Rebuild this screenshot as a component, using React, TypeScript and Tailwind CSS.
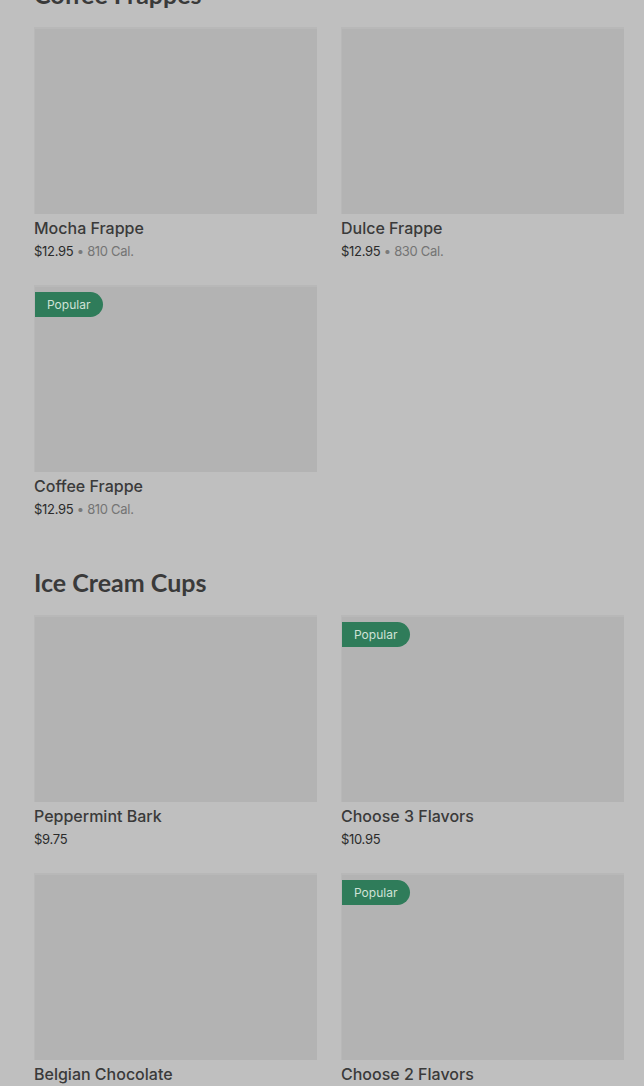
import React from 'react';

interface Item {
  name: string;
  price: string;
  cal?: string;
  popular?: boolean;
}

const sections: { title: string; items: Item[] }[] = [
  {
    title: 'Coffee Frappes',
    items: [
      { name: 'Mocha Frappe', price: '$12.95', cal: '810 Cal.' },
      { name: 'Dulce Frappe', price: '$12.95', cal: '830 Cal.' },
      { name: 'Coffee Frappe', price: '$12.95', cal: '810 Cal.', popular: true },
    ],
  },
  {
    title: 'Ice Cream Cups',
    items: [
      { name: 'Peppermint Bark', price: '$9.75' },
      { name: 'Choose 3 Flavors', price: '$10.95', popular: true },
      { name: 'Belgian Chocolate', price: '$9.75' },
      { name: 'Choose 2 Flavors', price: '$8.95', popular: true },
    ],
  },
];

const Card = ({ item }: { item: Item }) => (
  <div>
    <div className="relative h-[187px] bg-[#b3b3b3] border-t-[2px] border-l-[1px] border-[#b8b8b8]">
      {item.popular && (
        <span className="absolute left-0 top-[5px] h-[25px] pl-[12px] pr-[13px] rounded-r-full bg-[#2f7c5a] text-[#cfe2d7] text-[12px] leading-[25px] font-['Inter',sans-serif]">
          Popular
        </span>
      )}
    </div>
    <div className="mt-[3px] text-[16px] leading-[22px] font-medium text-[#3a3a3a] font-['Inter',sans-serif]">
      {item.name}
    </div>
    <div className="mt-[2px] text-[13px] leading-[20px] font-['Inter',sans-serif] tracking-[-0.3px]">
      <span className="text-[#2b2b2b]">{item.price}</span>
      {item.cal && (
        <>
          <span className="text-[#7a7a7a]"> • </span>
          <span className="text-[#747474]">{item.cal}</span>
        </>
      )}
    </div>
  </div>
);

export default function App() {
  return (
    <div className="h-[1086px] overflow-hidden bg-[#bfbfbf] pl-[34px] pr-[20px]">
      {sections.map((s, i) => (
        <section key={s.title} className={i === 0 ? '-mt-[22px]' : 'mt-[47px]'}>
          <h2 className="text-[25px] leading-[32px] font-bold text-[#3a3a3a] font-['Lato',sans-serif] mb-[17px]">
            {s.title}
          </h2>
          <div className="grid grid-cols-2 gap-x-[24px] gap-y-[24px]">
            {s.items.map((it) => (
              <Card key={it.name} item={it} />
            ))}
          </div>
        </section>
      ))}
    </div>
  );
}
